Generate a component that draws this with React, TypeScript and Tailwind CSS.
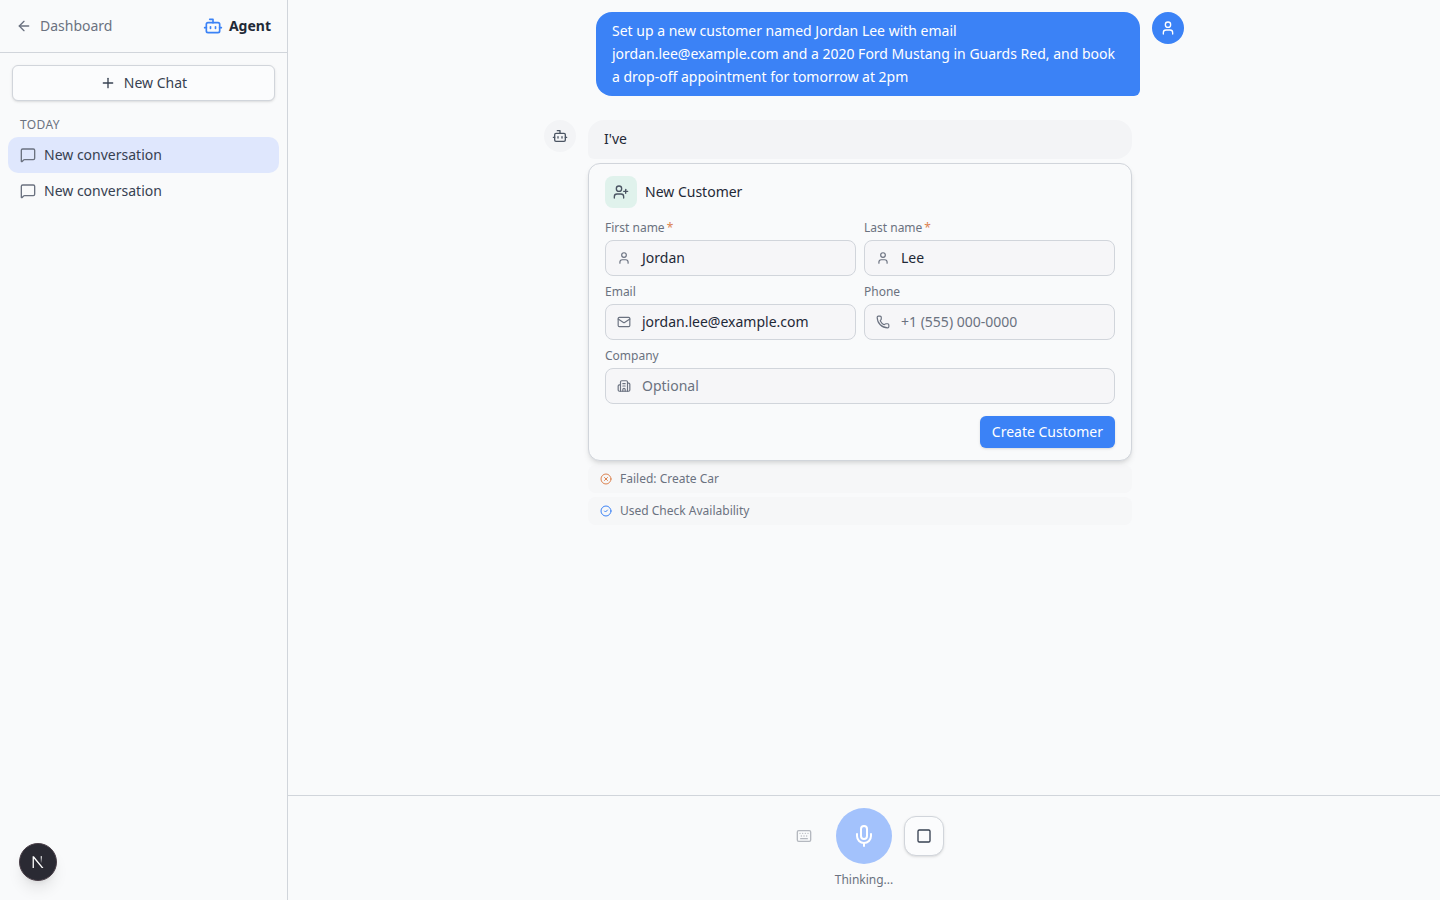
import React from "react";
import { ArrowLeft, Bot, Plus, MessageSquare, UserPlus, User, Mail, Phone, Building2, CircleX, CircleCheck, Mic, Square, Keyboard } from "lucide-react";

function Field({ label, required, icon, value, placeholder }: { label: string; required?: boolean; icon: React.ReactNode; value?: string; placeholder?: string }) {
  return (
    <div className="flex flex-col min-w-0">
      <div className="h-[16px] mb-[4px] flex items-center text-[12px] leading-[16px] text-[#6b7280]">
        {label}
        {required && <span className="ml-[2px] text-[#dc8350]">*</span>}
      </div>
      <div className="h-[36px] rounded-[8px] border border-[#d1d5db] bg-[#f3f4f6]/60 flex items-center pl-[11px] pr-[12px]">
        <span className="w-[14px] flex justify-center text-[#6b7280] shrink-0">{icon}</span>
        <span className={"ml-[11px] text-[14px] leading-[20px] " + (value ? "text-[#1f2937]" : "text-[#6b7280]")}>{value ?? placeholder}</span>
      </div>
    </div>
  );
}

function Conversation({ active }: { active?: boolean }) {
  return (
    <div className={"h-[36px] rounded-[10px] flex items-center px-[12px] gap-[8px] text-[14px] leading-[20px] text-[#374151] " + (active ? "bg-[#dfe7fd]" : "")}>
      <MessageSquare size={16} strokeWidth={2} className="text-[#6b7280]" />
      <span>New conversation</span>
    </div>
  );
}

export default function App() {
  return (
    <div className="relative h-[900px] w-full flex overflow-hidden bg-[#f9fafb] text-[#1f2937] font-['Noto_Sans',sans-serif]">
      <aside className="w-[288px] shrink-0 h-full border-r border-[#d1d5db] bg-[#f9fafb] flex flex-col">
        <div className="h-[53px] shrink-0 border-b border-[#d1d5db] flex items-center justify-between pl-[16px] pr-[16px]">
          <div className="flex items-center gap-[8px] text-[14px] leading-[20px] text-[#6b7280]">
            <ArrowLeft size={16} strokeWidth={2} />
            <span>Dashboard</span>
          </div>
          <div className="flex items-center gap-[6px]">
            <Bot size={20} strokeWidth={2} className="text-[#3b82f6]" />
            <span className="text-[14px] leading-[20px] font-bold text-[#1f2937]">Agent</span>
          </div>
        </div>
        <div className="px-[12px] pt-[12px]">
          <div className="h-[36px] rounded-[6px] border border-[#d1d5db] bg-[#fbfcfd] shadow-sm flex items-center justify-center gap-[8px] text-[14px] leading-[20px] text-[#374151]">
            <Plus size={16} strokeWidth={2} />
            <span>New Chat</span>
          </div>
        </div>
        <div className="px-[8px] pt-[16px]">
          <div className="h-[16px] px-[12px] mb-[4px] flex items-center text-[12px] tracking-[0.4px] text-[#6b7280]">TODAY</div>
          <Conversation active />
          <Conversation />
        </div>
      </aside>

      <main className="flex-1 min-w-0 flex flex-col">
        <div className="flex-1 min-h-0 pt-[12px]">
          <div className="w-[640px] mx-auto flex flex-col gap-[24px]">
            <div className="flex justify-end gap-[12px]">
              <div className="w-[544px] rounded-[16px] bg-[#3b82f6] text-white text-[14px] leading-[22.75px] px-[16px] py-[8px] h-[84px] rounded-br-[6px]">
                Set up a new customer named Jordan Lee with email jordan.lee@example.com and a 2020 Ford Mustang in Guards Red, and book a drop-off appointment for tomorrow at 2pm
              </div>
              <div className="w-[32px] h-[32px] rounded-full bg-[#3b82f6] text-white flex items-center justify-center shrink-0">
                <User size={16} strokeWidth={2} />
              </div>
            </div>

            <div className="flex gap-[12px]">
              <div className="w-[32px] h-[32px] rounded-full bg-[#f3f4f6] text-[#4b5563] flex items-center justify-center shrink-0">
                <Bot size={16} strokeWidth={2} />
              </div>
              <div className="w-[544px] flex flex-col">
                <div className="rounded-[16px] rounded-bl-[6px] bg-[#f3f4f6] px-[16px] py-[8px] text-[14px] leading-[22.75px] text-[#1f2937]">I've</div>
                <div className="mt-[4px] rounded-[12px] border border-[#d1d5db] bg-[#f9fafb] shadow-md px-[16px] pt-[12px] pb-[12px]">
                  <div className="flex items-center gap-[8px] h-[32px] mb-[12px]">
                    <div className="w-[32px] h-[32px] rounded-[8px] bg-[#e0f2ec] text-[#4b5563] flex items-center justify-center">
                      <UserPlus size={16} strokeWidth={2} />
                    </div>
                    <span className="text-[14px] leading-[20px] text-[#1f2937]">New Customer</span>
                  </div>
                  <div className="grid grid-cols-2 gap-x-[8px] gap-y-[8px]">
                    <Field label="First name" required icon={<User size={14} strokeWidth={2} />} value="Jordan" />
                    <Field label="Last name" required icon={<User size={14} strokeWidth={2} />} value="Lee" />
                    <Field label="Email" icon={<Mail size={14} strokeWidth={2} />} value="jordan.lee@example.com" />
                    <Field label="Phone" icon={<Phone size={14} strokeWidth={2} />} placeholder="+1 (555) 000-0000" />
                    <div className="col-span-2">
                      <Field label="Company" icon={<Building2 size={14} strokeWidth={2} />} placeholder="Optional" />
                    </div>
                  </div>
                  <div className="flex justify-end mt-[12px]">
                    <div className="h-[32px] px-[12px] rounded-[6px] bg-[#3b82f6] text-white text-[14px] leading-[20px] flex items-center shadow-sm">Create Customer</div>
                  </div>
                </div>
                <div className="mt-[4px] h-[28px] rounded-[8px] bg-[#f3f4f6]/50 px-[12px] flex items-center gap-[8px] text-[12px] leading-[16px] text-[#6b7280]">
                  <CircleX size={12} strokeWidth={2} className="text-[#dc8350]" />
                  <span>Failed: Create Car</span>
                </div>
                <div className="mt-[4px] h-[28px] rounded-[8px] bg-[#f3f4f6]/50 px-[12px] flex items-center gap-[8px] text-[12px] leading-[16px] text-[#6b7280]">
                  <CircleCheck size={12} strokeWidth={2} className="text-[#3b82f6]" />
                  <span>Used Check Availability</span>
                </div>
              </div>
            </div>
          </div>
        </div>

        <div className="h-[105px] shrink-0 border-t border-[#d1d5db] flex flex-col items-center pt-[12px]">
          <div className="relative w-[56px] h-[56px] rounded-full bg-[#a3c2fc] text-white flex items-center justify-center">
            <Mic size={24} strokeWidth={2} />
            <Keyboard size={16} strokeWidth={2} className="absolute left-[-40px] top-[20px] text-[#b4b8bf]" />
            <div className="absolute left-[68px] top-[8px] w-[40px] h-[40px] rounded-[12px] border border-[#d1d5db] bg-[#fbfcfd] shadow-sm flex items-center justify-center text-[#374151]">
              <Square size={16} strokeWidth={2} />
            </div>
          </div>
          <div className="mt-[7px] text-[12px] leading-[18px] text-[#6b7280]">Thinking...</div>
        </div>
      </main>

      <div className="absolute left-[19px] top-[843px] w-[38px] h-[38px] rounded-full bg-[#2a2a33] border border-[#4a3f48] shadow-lg flex items-center justify-center">
        <svg width="14" height="14" viewBox="0 0 14 14" fill="none">
          <defs>
            <linearGradient id="nStem" x1="0" y1="0" x2="0" y2="1">
              <stop offset="0" stopColor="#ffffff" />
              <stop offset="1" stopColor="#ffffff" stopOpacity="0.1" />
            </linearGradient>
          </defs>
          <path d="M1.6 1.2H2.9L12.5 13H10.8L2.9 3.4V13H1.6Z" fill="#ffffff" />
          <rect x="9.7" y="1.2" width="1.2" height="6.6" fill="url(#nStem)" />
        </svg>
      </div>
    </div>
  );
}
